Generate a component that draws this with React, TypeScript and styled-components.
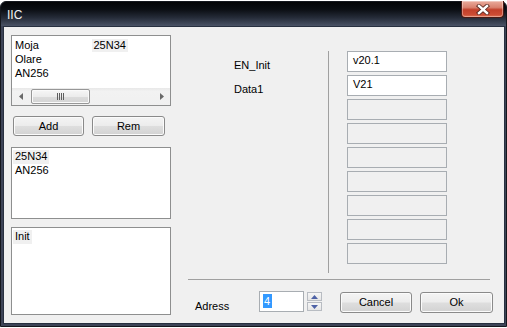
import React from "react";
import styled, { createGlobalStyle } from "styled-components";

const GlobalStyle = createGlobalStyle`
  html, body {
    margin: 0;
    padding: 0;
    background: #ffffff;
  }
  body {
    font-family: "Liberation Sans", Arial, sans-serif;
    font-size: 11px;
    color: #000000;
  }
`;

const Window = styled.div`
  width: 507px;
  height: 326px;
  margin-top: 1px;
  box-sizing: border-box;
  border: 1px solid #14171d;
  border-radius: 6px 6px 0 0;
  background: #3d4457;
  display: flex;
  flex-direction: column;
`;

const TitleBar = styled.div`
  height: 24px;
  flex: none;
  display: flex;
  align-items: flex-start;
  border-radius: 5px 5px 0 0;
  background: linear-gradient(
    to bottom,
    #030406 0%,
    #0a0d12 30%,
    #252b38 65%,
    #4a5366 100%
  );
`;

const Title = styled.span`
  margin: 6px 0 0 6px;
  font-size: 12px;
  line-height: 14px;
  color: #f2f2f2;
`;

const CloseButton = styled.div`
  margin: -1px 2px 0 auto;
  width: 43px;
  height: 17px;
  box-sizing: border-box;
  border: 1px solid #4a1a14;
  border-top: none;
  border-radius: 0 0 4px 4px;
  background: linear-gradient(
    to bottom,
    #eaab9c 0%,
    #d9826f 40%,
    #c2402a 55%,
    #cc4c34 85%,
    #de7456 100%
  );
  box-shadow: inset 0 0 0 1px rgba(255, 255, 255, 0.35);
  display: flex;
  align-items: center;
  justify-content: center;
`;

const Frame = styled.div`
  flex: 1;
  display: flex;
  padding: 0 1px 2px 2px;
`;

const Client = styled.div`
  flex: 1;
  display: flex;
  align-items: flex-start;
  padding: 8px 0 0 7px;
  border: 1px solid #283040;
  background: #f0f0f0;
`;

const LeftColumn = styled.div`
  width: 160px;
  flex: none;
  display: flex;
  flex-direction: column;
`;

const ListBox = styled.div<{ $h: number; $mt?: number }>`
  height: ${(p) => p.$h}px;
  margin-top: ${(p) => p.$mt ?? 0}px;
  box-sizing: border-box;
  border: 1px solid #8e8f8f;
  background: #ffffff;
  display: flex;
  flex-direction: column;
  overflow: hidden;
`;

const Items = styled.div<{ $pt?: number }>`
  flex: 1;
  padding: ${(p) => p.$pt ?? 2}px 0 0 1px;
`;

const ItemRow = styled.div`
  height: 14px;
  display: flex;
`;

const ItemCell = styled.div`
  width: 80px;
`;

const ItemText = styled.span<{ $sel?: boolean }>`
  display: inline-block;
  padding: 0 2px;
  line-height: 13px;
  background: ${(p) => (p.$sel ? "#f0f0f0" : "transparent")};
`;

const HScroll = styled.div`
  height: 17px;
  flex: none;
  display: flex;
  background: linear-gradient(to bottom, #e8e8e8 0%, #f2f2f2 20%, #f0f0f0 100%);
`;

const ScrollArrow = styled.div`
  width: 17px;
  display: flex;
  align-items: center;
  justify-content: center;
`;

const ScrollTrack = styled.div`
  flex: 1;
  padding: 1px 0 0 2px;
`;

const Thumb = styled.div`
  width: 59px;
  height: 15px;
  box-sizing: border-box;
  border: 1px solid #979797;
  border-radius: 2px;
  background: linear-gradient(to bottom, #f6f6f6 0%, #ececec 50%, #dcdcdc 51%, #d4d4d4 100%);
  box-shadow: inset 0 0 0 1px #fafafa;
  display: flex;
  align-items: center;
  justify-content: center;
`;

const ButtonRow = styled.div`
  display: flex;
  gap: 8px;
  margin-top: 10px;
  padding-left: 2px;
`;

const PushButton = styled.div<{ $w: number; $h?: number }>`
  flex: none;
  width: ${(p) => p.$w}px;
  height: ${(p) => p.$h ?? 20}px;
  box-sizing: border-box;
  border: 1px solid #8a8a8a;
  border-radius: 3px;
  background: linear-gradient(to bottom, #f4f4f4 0%, #ececec 48%, #dedede 52%, #d2d2d2 100%);
  box-shadow: inset 0 0 0 1px #fbfbfb;
  display: flex;
  align-items: center;
  justify-content: center;
  line-height: 13px;
`;

const RightColumn = styled.div`
  width: 302px;
  flex: none;
  margin: 16px 0 0 17px;
  display: flex;
  flex-direction: column;
`;

const Upper = styled.div`
  height: 222px;
  display: flex;
`;

const LabelCol = styled.div`
  width: 140px;
  flex: none;
  padding: 8px 0 0 46px;
  box-sizing: border-box;
`;

const FieldLabel = styled.div`
  height: 24px;
  line-height: 13px;
`;

const VLine = styled.div`
  width: 1px;
  flex: none;
  background: #a0a0a0;
`;

const FieldCol = styled.div`
  margin-left: 18px;
  display: flex;
  flex-direction: column;
  gap: 3px;
`;

const TextBox = styled.div<{ $disabled?: boolean }>`
  width: 100px;
  height: 21px;
  box-sizing: border-box;
  border: 1px solid #a8adb2;
  background: ${(p) => (p.$disabled ? "#f0f0f0" : "#ffffff")};
  padding: 2px 0 0 5px;
  line-height: 13px;
`;

const HLine = styled.div`
  height: 1px;
  margin-top: 6px;
  background: #a0a0a0;
`;

const BottomRow = styled.div`
  margin-top: 11px;
  display: flex;
  align-items: flex-start;
`;

const BottomLabel = styled.div`
  flex: none;
  width: 71px;
  box-sizing: border-box;
  padding: 9px 0 0 7px;
  line-height: 13px;
`;

const SpinEdit = styled.div`
  flex: none;
  width: 45px;
  height: 21px;
  box-sizing: border-box;
  border: 1px solid #a8adb2;
  background: #ffffff;
  padding: 2px 0 0 3px;
`;

const Selection = styled.span`
  display: inline-block;
  width: 9px;
  height: 14px;
  line-height: 14px;
  padding-left: 1px;
  box-sizing: border-box;
  background: #3399ff;
  color: #ffffff;
`;

const SpinButtons = styled.div`
  flex: none;
  margin: 1px 0 0 3px;
  display: flex;
  flex-direction: column;
  gap: 1px;
`;

const SpinButton = styled.div`
  width: 15px;
  height: 9px;
  box-sizing: border-box;
  border: 1px solid #b8bcc2;
  background: linear-gradient(to bottom, #f6f6f6 0%, #e6e6e6 100%);
  display: flex;
  align-items: center;
  justify-content: center;
`;

const DialogButtons = styled.div`
  flex: none;
  margin: 1px 0 0 18px;
  display: flex;
  gap: 8px;
`;

const CloseIcon = () => (
  <svg width="14" height="11" viewBox="0 0 14 11">
    <path d="M3 2 L11 9 M11 2 L3 9" stroke="#5a2a22" strokeWidth="4.2" strokeLinecap="square" />
    <path d="M3 2 L11 9 M11 2 L3 9" stroke="#ffffff" strokeWidth="2.4" strokeLinecap="square" />
  </svg>
);

const Arrow = ({ dir }: { dir: "left" | "right" }) => (
  <svg width="4" height="7" viewBox="0 0 4 7">
    <path d={dir === "left" ? "M4 0 L0 3.5 L4 7 Z" : "M0 0 L4 3.5 L0 7 Z"} fill="#6a6a6a" />
  </svg>
);

const Grip = () => (
  <svg width="8" height="7" viewBox="0 0 8 7">
    {[0, 2, 4, 6].map((x) => (
      <rect key={x} x={x} y="0" width="1" height="7" fill="#5e5e5e" />
    ))}
  </svg>
);

const SpinArrow = ({ up }: { up?: boolean }) => (
  <svg width="7" height="4" viewBox="0 0 7 4">
    <path d={up ? "M0 4 L3.5 0 L7 4 Z" : "M0 0 L3.5 4 L7 0 Z"} fill="#4e62a6" />
  </svg>
);

const fields = ["v20.1", "V21", "", "", "", "", "", "", ""];

export default function App() {
  return (
    <>
      <GlobalStyle />
      <Window>
        <TitleBar>
          <Title>IIC</Title>
          <CloseButton>
            <CloseIcon />
          </CloseButton>
        </TitleBar>
        <Frame>
          <Client>
            <LeftColumn>
              <ListBox $h={71}>
                <Items $pt={3}>
                  <ItemRow>
                    <ItemCell>
                      <ItemText>Moja</ItemText>
                    </ItemCell>
                    <ItemCell>
                      <ItemText $sel>25N34</ItemText>
                    </ItemCell>
                  </ItemRow>
                  <ItemRow>
                    <ItemCell>
                      <ItemText>Olare</ItemText>
                    </ItemCell>
                  </ItemRow>
                  <ItemRow>
                    <ItemCell>
                      <ItemText>AN256</ItemText>
                    </ItemCell>
                  </ItemRow>
                </Items>
                <HScroll>
                  <ScrollArrow>
                    <Arrow dir="left" />
                  </ScrollArrow>
                  <ScrollTrack>
                    <Thumb>
                      <Grip />
                    </Thumb>
                  </ScrollTrack>
                  <ScrollArrow>
                    <Arrow dir="right" />
                  </ScrollArrow>
                </HScroll>
              </ListBox>

              <ButtonRow>
                <PushButton $w={71}>Add</PushButton>
                <PushButton $w={73}>Rem</PushButton>
              </ButtonRow>

              <ListBox $h={72} $mt={11}>
                <Items>
                  <ItemRow>
                    <ItemText $sel>25N34</ItemText>
                  </ItemRow>
                  <ItemRow>
                    <ItemText>AN256</ItemText>
                  </ItemRow>
                </Items>
              </ListBox>

              <ListBox $h={88} $mt={8}>
                <Items>
                  <ItemRow>
                    <ItemText $sel>Init</ItemText>
                  </ItemRow>
                </Items>
              </ListBox>
            </LeftColumn>

            <RightColumn>
              <Upper>
                <LabelCol>
                  <FieldLabel>EN_Init</FieldLabel>
                  <FieldLabel>Data1</FieldLabel>
                </LabelCol>
                <VLine />
                <FieldCol>
                  {fields.map((v, i) => (
                    <TextBox key={i} $disabled={i > 1}>
                      {v}
                    </TextBox>
                  ))}
                </FieldCol>
              </Upper>
              <HLine />
              <BottomRow>
                <BottomLabel>Adress</BottomLabel>
                <SpinEdit>
                  <Selection>4</Selection>
                </SpinEdit>
                <SpinButtons>
                  <SpinButton>
                    <SpinArrow up />
                  </SpinButton>
                  <SpinButton>
                    <SpinArrow />
                  </SpinButton>
                </SpinButtons>
                <DialogButtons>
                  <PushButton $w={72} $h={21}>
                    Cancel
                  </PushButton>
                  <PushButton $w={73} $h={21}>
                    Ok
                  </PushButton>
                </DialogButtons>
              </BottomRow>
            </RightColumn>
          </Client>
        </Frame>
      </Window>
    </>
  );
}
